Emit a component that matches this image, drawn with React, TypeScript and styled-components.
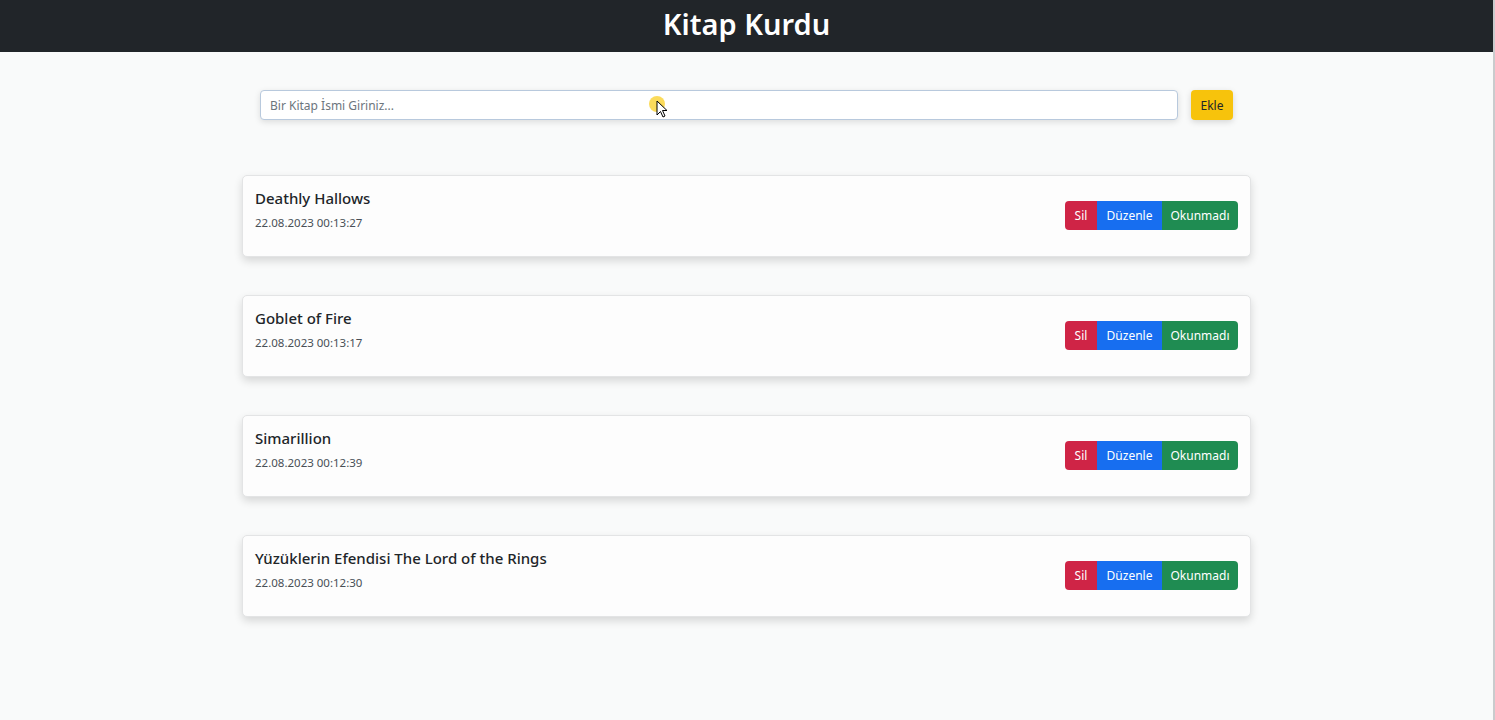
import React from "react";
import styled, { createGlobalStyle } from "styled-components";

const GlobalStyle = createGlobalStyle`
  html, body { margin: 0; padding: 0; }
  body {
    background: #f9fafa;
    font-family: "Noto Sans", "Open Sans", sans-serif;
    color: #212529;
    overflow: hidden;
  }
  * { box-sizing: border-box; }
`;

const Page = styled.div`
  position: relative;
  min-height: 720px;
  border-right: 2px solid #c9cbcd;
`;

const Header = styled.header`
  height: 52px;
  background: #212529;
  display: flex;
  align-items: center;
  justify-content: center;
`;

const Title = styled.h1`
  margin: 0;
  color: #ffffff;
  font-size: 29px;
  font-weight: 600;
  line-height: 1;
  padding-bottom: 6px;
`;

const Main = styled.main`
  width: 1009px;
  margin: 0 auto;
  padding-top: 38px;
  display: flex;
  flex-direction: column;
`;

const AddRow = styled.div`
  display: flex;
  align-items: center;
  gap: 13px;
  padding: 0 18px;
  margin-bottom: 55px;
`;

const Input = styled.input`
  flex: 1;
  height: 30px;
  border: 1px solid #b8c9dd;
  border-radius: 4px;
  padding: 0 9px;
  font-family: inherit;
  font-size: 12px;
  color: #212529;
  background: #ffffff;
  box-shadow: 0 2px 6px rgba(0, 0, 0, 0.12);
  outline: none;
  &::placeholder { color: #6c757d; }
`;

const AddButton = styled.button`
  height: 30px;
  width: 42px;
  border: none;
  border-radius: 4px;
  background: #f7c30c;
  color: #212529;
  font-family: inherit;
  font-size: 12px;
  box-shadow: 0 2px 6px rgba(0, 0, 0, 0.15);
  cursor: pointer;
`;

const List = styled.div`
  display: flex;
  flex-direction: column;
  gap: 38px;
`;

const Card = styled.div`
  height: 82px;
  background: #fdfdfd;
  border: 1px solid #e3e4e5;
  border-radius: 5px;
  box-shadow: 0 4px 8px rgba(0, 0, 0, 0.14);
  display: flex;
  align-items: flex-start;
  justify-content: space-between;
  padding: 12px 12px 0 12px;
`;

const Info = styled.div`
  display: flex;
  flex-direction: column;
`;

const BookName = styled.div`
  font-size: 15px;
  font-weight: 500;
  line-height: 20px;
  color: #212529;
`;

const BookDate = styled.div`
  margin-top: 7px;
  font-size: 11.5px;
  line-height: 16px;
  color: #495057;
`;

const Group = styled.div`
  display: flex;
  margin-top: 13px;
  border-radius: 4px;
  overflow: hidden;
`;

const ActionButton = styled.button<{ $bg: string; $w: number }>`
  height: 29px;
  width: ${(p) => p.$w}px;
  border: none;
  background: ${(p) => p.$bg};
  color: #ffffff;
  font-family: inherit;
  font-size: 12px;
  padding: 0;
  cursor: pointer;
`;

const Cursor = styled.div`
  position: absolute;
  left: 649px;
  top: 96px;
  width: 24px;
  height: 24px;
  pointer-events: none;
`;

const CursorDot = styled.div`
  position: absolute;
  left: 0;
  top: 0;
  width: 16px;
  height: 16px;
  border-radius: 50%;
  background: rgba(250, 210, 50, 0.8);
`;

const books = [
  { name: "Deathly Hallows", date: "22.08.2023 00:13:27" },
  { name: "Goblet of Fire", date: "22.08.2023 00:13:17" },
  { name: "Simarillion", date: "22.08.2023 00:12:39" },
  { name: "Yüzüklerin Efendisi The Lord of the Rings", date: "22.08.2023 00:12:30" },
];

export default function App() {
  return (
    <>
      <GlobalStyle />
      <Page>
        <Header>
          <Title>Kitap Kurdu</Title>
        </Header>
        <Main>
          <AddRow>
            <Input placeholder="Bir Kitap İsmi Giriniz..." />
            <AddButton>Ekle</AddButton>
          </AddRow>
          <List>
            {books.map((b) => (
              <Card key={b.name}>
                <Info>
                  <BookName>{b.name}</BookName>
                  <BookDate>{b.date}</BookDate>
                </Info>
                <Group>
                  <ActionButton $bg="#cf2446" $w={32}>Sil</ActionButton>
                  <ActionButton $bg="#176ef0" $w={65}>Düzenle</ActionButton>
                  <ActionButton $bg="#1f8c52" $w={76}>Okunmadı</ActionButton>
                </Group>
              </Card>
            ))}
          </List>
        </Main>
        <Cursor>
          <CursorDot />
          <svg width="14" height="20" viewBox="0 0 14 20" style={{ position: "absolute", left: 7, top: 4 }}>
            <path d="M1 1 L1 15 L4.5 11.5 L7 17 L9 16 L6.5 10.5 L11 10.5 Z" fill="#ffffff" stroke="#000000" strokeWidth="1" strokeLinejoin="round" />
          </svg>
        </Cursor>
      </Page>
    </>
  );
}
